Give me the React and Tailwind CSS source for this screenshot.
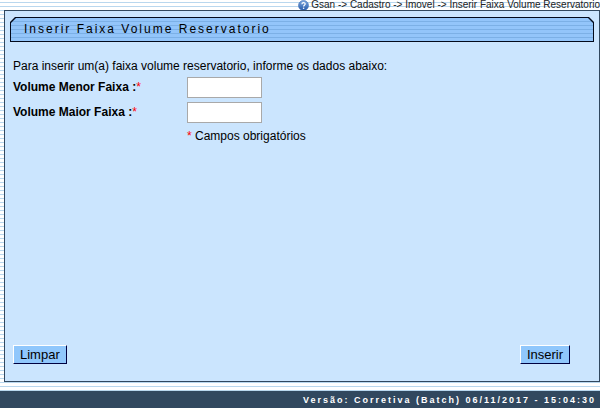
import { useState } from 'react';

const FONT = "font-['Liberation_Sans',Arial,sans-serif]";

const STRIPES = 'bg-[repeating-linear-gradient(to_bottom,#ffffff_0px,#ffffff_2px,#b9d7ee_2px,#b9d7ee_3px,#ffffff_3px,#ffffff_4px)]';

function HelpIcon() {
  return (
    <svg className="size-[11px] shrink-0" viewBox="0 0 11 11" aria-hidden="true">
      <defs>
        <linearGradient id="help" x1="0" y1="0" x2="0" y2="1">
          <stop offset="0" stopColor="#7fa9e0" />
          <stop offset="1" stopColor="#2458a8" />
        </linearGradient>
      </defs>
      <circle cx="5.5" cy="5.5" r="5" fill="url(#help)" stroke="#3f6fb5" strokeWidth="0.6" />
      <path d="M3.9 4.2c0-2.2 3.3-2.1 3.3-.2 0 1.2-1.6 1.2-1.6 2.5" fill="none" stroke="#fff" strokeWidth="1.2" />
      <circle cx="5.6" cy="8.2" r="0.8" fill="#fff" />
    </svg>
  );
}

function Breadcrumb() {
  return (
    <nav className="flex h-[10px] items-center justify-end gap-[2px] text-[10px] leading-[10px] whitespace-nowrap text-[#222]">
      <HelpIcon />
      <span>Gsan -&gt; Cadastro -&gt; Imovel -&gt; Inserir Faixa Volume Reservatorio</span>
    </nav>
  );
}

// Bar with the two top corners cut off
function TitleBar({ children }) {
  return (
    <div className="bg-[#020a1c] p-px [clip-path:polygon(5px_0,calc(100%-5px)_0,100%_5px,100%_100%,0_100%,0_5px)]">
      <h1 className="h-[23px] bg-[repeating-linear-gradient(to_bottom,#93c5fa_0px,#93c5fa_3px,#7cb0e6_3px,#7cb0e6_4px)] pl-[13px] text-[12px] leading-[23px] tracking-[2px] text-black [clip-path:polygon(5px_0,calc(100%-5px)_0,100%_5px,100%_100%,0_100%,0_5px)]">
        {children}
      </h1>
    </div>
  );
}

function Field({ id, label, value, onChange }) {
  return (
    <div className="flex h-[25px] items-center">
      <label htmlFor={id} className="w-[174px] pb-[2px] font-bold">
        {label} :<span className="font-normal text-[#ff0000]">*</span>
      </label>
      <input
        id={id}
        type="text"
        value={value}
        onChange={(e) => onChange(e.target.value)}
        className="h-[21px] w-[75px] border border-[#a9a9a9] bg-white px-[2px]"
      />
    </div>
  );
}

function Button({ children, ...props }) {
  return (
    <button
      className="h-[19px] border border-t-white border-l-white border-r-[#000040] border-b-[#000040] bg-[#90c7fc] px-[6px] text-[13px] leading-[17px] text-black"
      {...props}
    >
      {children}
    </button>
  );
}

export default function App() {
  const [menor, setMenor] = useState('');
  const [maior, setMaior] = useState('');

  const limpar = () => {
    setMenor('');
    setMaior('');
  };

  return (
    <div className={`flex min-h-screen flex-col ${STRIPES} ${FONT} text-[12px] text-black`}>
      <Breadcrumb />

      <main className="ml-1 flex flex-1 flex-col border border-[#31485f] bg-[#cbe5fe] px-[5px] pt-[6px]">
        <TitleBar>Inserir Faixa Volume Reservatorio</TitleBar>

        <form className="flex flex-1 flex-col pt-4 pr-6 pb-[17px] pl-[3px]" onSubmit={(e) => e.preventDefault()}>
          <p className="leading-[17px]">Para inserir um(a) faixa volume reservatorio, informe os dados abaixo:</p>
          <Field id="menor" label="Volume Menor Faixa" value={menor} onChange={setMenor} />
          <Field id="maior" label="Volume Maior Faixa" value={maior} onChange={setMaior} />
          <p className="pl-[174px] leading-[22px]">
            <span className="text-[#ff0000]">*</span> Campos obrigatórios
          </p>
          <div className="mt-auto flex justify-between">
            <Button type="button" onClick={limpar}>Limpar</Button>
            <Button type="submit">Inserir</Button>
          </div>
        </form>
      </main>

      <footer className="mt-[9px] h-[17px] bg-[#31485f] pr-1 text-right text-[9px] leading-[18px] font-bold tracking-[2px] whitespace-nowrap text-white">
        Versão: Corretiva (Batch) 06/11/2017 - 15:04:30
      </footer>
    </div>
  );
}
